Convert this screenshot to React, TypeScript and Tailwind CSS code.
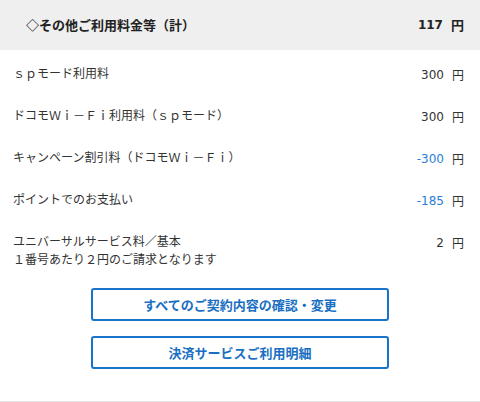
import React from 'react';

const rows: { label: React.ReactNode; amount: string; minus?: boolean }[] = [
  { label: 'ｓｐモード利用料', amount: '300' },
  { label: 'ドコモＷｉ－Ｆｉ利用料（ｓｐモード）', amount: '300' },
  { label: 'キャンペーン割引料（ドコモＷｉ－Ｆｉ）', amount: '-300', minus: true },
  { label: 'ポイントでのお支払い', amount: '-185', minus: true },
  {
    label: (
      <>
        ユニバーサルサービス料／基本
        <br />
        １番号あたり２円のご請求となります
      </>
    ),
    amount: '2',
  },
];

const num = { fontFamily: '"DejaVu Sans", Verdana, sans-serif' };

export default function App() {
  return (
    <div
      className="w-[480px] h-[402px] bg-white border-b border-[#e6e6e6] text-[#333]"
      style={{ fontFamily: '"Noto Sans CJK JP", "Noto Sans", sans-serif' }}
    >
      <div className="h-[50px] bg-[#efefef] flex items-center justify-between pl-[26px] pr-[16px] text-[13px] font-bold text-[#222]">
        <span>◇その他ご利用料金等（計）</span>
        <span className="flex items-center gap-[8px]">
          <span style={num} className="text-[12px]">117</span>
          <span>円</span>
        </span>
      </div>

      <ul className="pl-[13px] pr-[16px] pt-[14px]">
        {rows.map((r, i) => (
          <li key={i} className="flex justify-between items-start h-[42px] text-[12px] leading-[18px]">
            <span>{r.label}</span>
            <span className="pt-[2px] flex items-center gap-[8px]">
              <span style={num} className={`text-[12px] ${r.minus ? 'text-[#2a7fd4]' : 'text-[#333]'}`}>
                {r.amount}
              </span>
              <span>円</span>
            </span>
          </li>
        ))}
      </ul>

      <div className="flex flex-col items-center gap-[15px] pt-[14px]">
        <button
          type="button"
          className="w-[298px] h-[33px] border-2 border-[#1a73c8] rounded-[3px] text-[13px] font-bold text-[#1a6fc2]"
        >
          すべてのご契約内容の確認・変更
        </button>
        <button
          type="button"
          className="w-[298px] h-[33px] border-2 border-[#1a73c8] rounded-[3px] text-[13px] font-bold text-[#1a6fc2]"
        >
          決済サービスご利用明細
        </button>
      </div>
    </div>
  );
}
